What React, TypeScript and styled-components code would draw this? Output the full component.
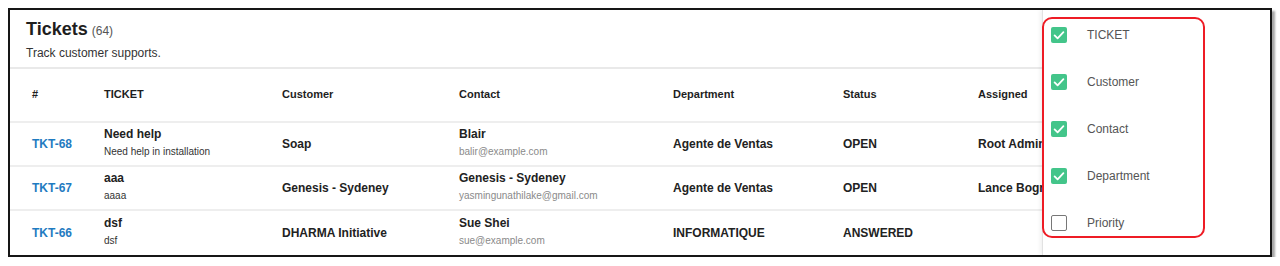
import React from "react";
import styled, { createGlobalStyle } from "styled-components";

const GlobalStyle = createGlobalStyle`
  html, body {
    margin: 0;
    padding: 0;
    background: #ffffff;
  }
  body {
    font-family: "Liberation Sans", Arial, sans-serif;
    color: #222;
  }
`;

const Frame = styled.div`
  position: relative;
  box-sizing: border-box;
  width: 1264px;
  height: 249px;
  margin: 8px 0 0 8px;
  border: 2px solid #161616;
  box-shadow: 3px 3px 2px rgba(0, 0, 0, 0.35);
  background: #fff;
  overflow: hidden;
`;

const Header = styled.div`
  box-sizing: border-box;
  height: 59px;
  padding: 8px 16px 0;
  border-bottom: 2px solid #e9e9e9;
`;

const Title = styled.h1`
  margin: 0;
  font-size: 18px;
  line-height: 22px;
  font-weight: 700;
  color: #1e1e1e;
`;

const Count = styled.span`
  margin-left: 4px;
  font-size: 12px;
  font-weight: 400;
  color: #555;
`;

const Subtitle = styled.p`
  margin: 3px 0 0;
  font-size: 12px;
  line-height: 16px;
  color: #333;
`;

const Table = styled.table`
  border-collapse: collapse;
  table-layout: fixed;
  width: 1260px;
`;

const HeadRow = styled.tr`
  height: 53px;
  border-bottom: 2px solid #eeeeee;
`;

const Th = styled.th`
  padding: 0 0 2px 22px;
  text-align: left;
  font-size: 11px;
  font-weight: 700;
  color: #1e1e1e;
  white-space: nowrap;
`;

const Row = styled.tr<{ $last?: boolean }>`
  height: ${p => (p.$last ? "45px" : "44px")};
  border-bottom: ${p => (p.$last ? "none" : "2px solid #eeeeee")};
`;

const Td = styled.td`
  padding: 0 0 0 22px;
  font-size: 12px;
  font-weight: 700;
  color: #222;
  white-space: nowrap;
  overflow: hidden;
`;

const TicketLink = styled.a`
  color: #1f7bc1;
  font-weight: 700;
  text-decoration: none;
`;

const Stack = styled.div`
  margin-top: -4px;
`;

const Main = styled.div`
  font-size: 12px;
  line-height: 16px;
  font-weight: 700;
  color: #222;
`;

const Sub = styled.div<{ $muted?: boolean }>`
  margin-top: 3px;
  font-size: 10px;
  line-height: 13px;
  font-weight: 400;
  color: ${p => (p.$muted ? "#8a8a8a" : "#333")};
`;

const Panel = styled.div`
  position: absolute;
  top: 0;
  right: 0;
  bottom: 0;
  width: 227px;
  background: #fff;
  border-left: 1px solid #e2e2e2;
  box-shadow: -2px 0 4px rgba(0, 0, 0, 0.06);
  display: flex;
  flex-direction: column;
  padding-top: 1px;
`;

const Option = styled.label`
  display: flex;
  align-items: center;
  height: 47px;
  padding-left: 8px;
  font-size: 12px;
  color: #555;
`;

const Box = styled.span<{ $checked: boolean }>`
  box-sizing: border-box;
  width: 16px;
  height: 16px;
  border-radius: 2px;
  background: ${p => (p.$checked ? "#43c58a" : "#fff")};
  border: ${p => (p.$checked ? "none" : "1px solid #777")};
  display: inline-flex;
  align-items: center;
  justify-content: center;
  margin-right: 20px;
`;

const Highlight = styled.div`
  position: absolute;
  left: 1032px;
  top: 7px;
  width: 163px;
  height: 221px;
  box-sizing: border-box;
  border: 2px solid #ee1c25;
  border-radius: 10px;
  pointer-events: none;
`;

const Check = () => (
  <svg width="16" height="16" viewBox="0 0 16 16">
    <path d="M3.6 8.4 L6.6 11.3 L12.4 5.2" fill="none" stroke="#fff" strokeWidth="1.8" strokeLinecap="round" strokeLinejoin="round" />
  </svg>
);

const tickets = [
  { id: "TKT-68", title: "Need help", desc: "Need help in installation", customer: "Soap", contact: "Blair", email: "balir@example.com", dept: "Agente de Ventas", status: "OPEN", assigned: "Root Admin" },
  { id: "TKT-67", title: "aaa", desc: "aaaa", customer: "Genesis - Sydeney", contact: "Genesis - Sydeney", email: "yasmingunathilake@gmail.com", dept: "Agente de Ventas", status: "OPEN", assigned: "Lance Bogrol" },
  { id: "TKT-66", title: "dsf", desc: "dsf", customer: "DHARMA Initiative", contact: "Sue Shei", email: "sue@example.com", dept: "INFORMATIQUE", status: "ANSWERED", assigned: "" },
];

const columns = [
  { label: "TICKET", checked: true },
  { label: "Customer", checked: true },
  { label: "Contact", checked: true },
  { label: "Department", checked: true },
  { label: "Priority", checked: false },
];

export default function App() {
  return (
    <>
      <GlobalStyle />
      <Frame>
        <Header>
          <Title>
            Tickets<Count>(64)</Count>
          </Title>
          <Subtitle>Track customer supports.</Subtitle>
        </Header>
        <Table>
          <colgroup>
            <col style={{ width: 72 }} />
            <col style={{ width: 178 }} />
            <col style={{ width: 177 }} />
            <col style={{ width: 214 }} />
            <col style={{ width: 170 }} />
            <col style={{ width: 135 }} />
            <col />
          </colgroup>
          <thead>
            <HeadRow>
              <Th>#</Th>
              <Th>TICKET</Th>
              <Th>Customer</Th>
              <Th>Contact</Th>
              <Th>Department</Th>
              <Th>Status</Th>
              <Th>Assigned</Th>
            </HeadRow>
          </thead>
          <tbody>
            {tickets.map((t, i) => (
              <Row key={t.id} $last={i === tickets.length - 1}>
                <Td>
                  <TicketLink href="#">{t.id}</TicketLink>
                </Td>
                <Td>
                  <Stack>
                    <Main>{t.title}</Main>
                    <Sub>{t.desc}</Sub>
                  </Stack>
                </Td>
                <Td>{t.customer}</Td>
                <Td>
                  <Stack>
                    <Main>{t.contact}</Main>
                    <Sub $muted>{t.email}</Sub>
                  </Stack>
                </Td>
                <Td>{t.dept}</Td>
                <Td>{t.status}</Td>
                <Td>{t.assigned}</Td>
              </Row>
            ))}
          </tbody>
        </Table>
        <Panel>
          {columns.map(c => (
            <Option key={c.label}>
              <Box $checked={c.checked}>{c.checked && <Check />}</Box>
              {c.label}
            </Option>
          ))}
        </Panel>
        <Highlight />
      </Frame>
    </>
  );
}
